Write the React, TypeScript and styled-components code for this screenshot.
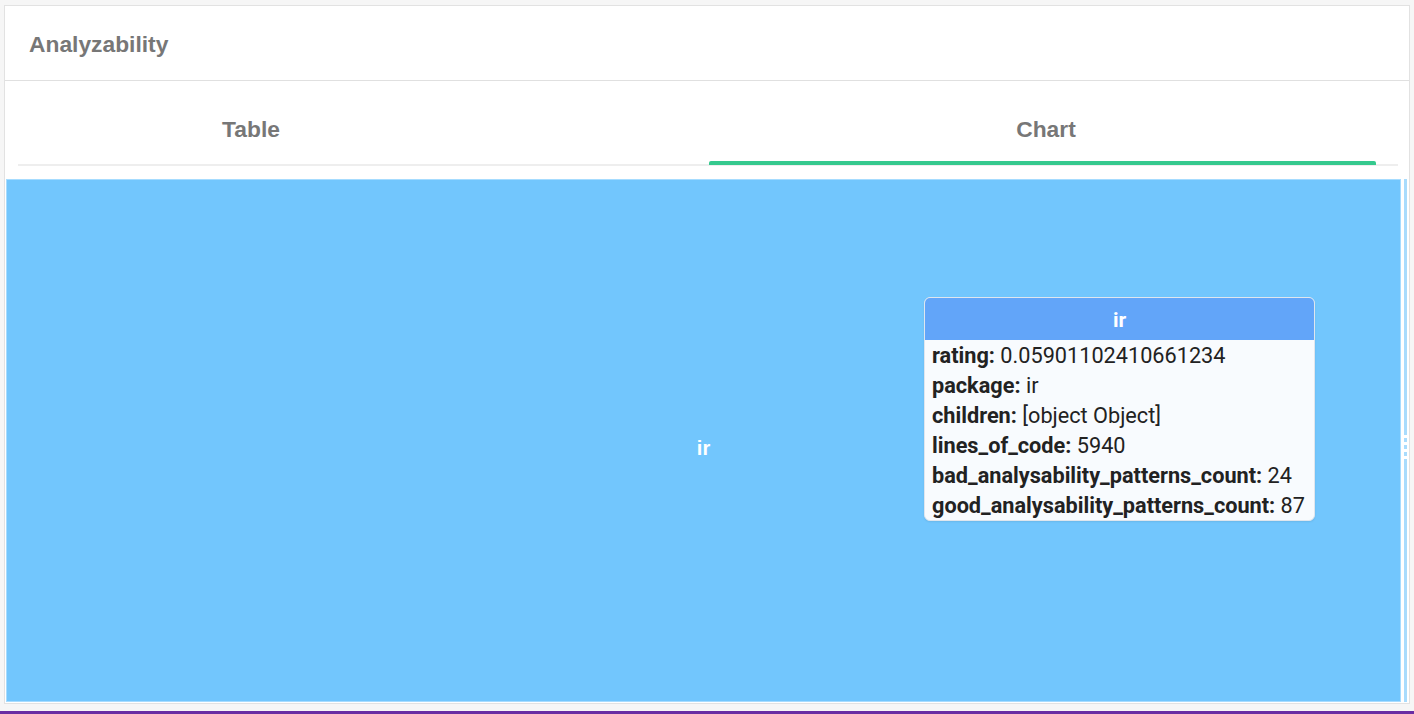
import React from "react";
import styled, { createGlobalStyle } from "styled-components";

const Global = createGlobalStyle`
  html, body { margin: 0; padding: 0; background: #f6f6f6; }
  body { font-family: "Liberation Sans", Arial, sans-serif; overflow: hidden; }
  #root { height: 714px; display: flex; flex-direction: column; }
`;

const Card = styled.section`
  margin: 5px 4px 0 4px;
  width: 1406px;
  height: 699px;
  box-sizing: border-box;
  border: 1px solid #e2e2e2;
  background: #fff;
  display: flex;
  flex-direction: column;
`;

const Header = styled.header`
  height: 75px;
  box-sizing: border-box;
  border-bottom: 1px solid #e0e0e0;
  display: flex;
  align-items: center;
  padding: 2px 0 0 24px;
  font-size: 22.8px;
  font-weight: 700;
  color: #777;
`;

const TabRow = styled.nav`
  position: relative;
  margin: 0 11px 0 13px;
  height: 85px;
  display: flex;
  align-items: stretch;
  border-bottom: 2px solid #eeeeee;
  box-sizing: border-box;
`;

const Tab = styled.div<{ $w: number; $ml?: number }>`
  position: relative;
  flex: 0 0 ${(p) => p.$w}px;
  margin-left: ${(p) => p.$ml ?? 0}px;
  display: flex;
  align-items: center;
  justify-content: center;
  padding-top: 14px;
  box-sizing: border-box;
  font-size: 22.8px;
  font-weight: 700;
  color: #777;
`;

const Indicator = styled.span`
  position: absolute;
  left: 0;
  bottom: -1px;
  width: 667px;
  height: 4px;
  border-radius: 2px 2px 0 0;
  background: #35c98e;
`;

const ChartWrap = styled.div`
  margin: 13px 2px 0 1px;
  height: 523px;
  display: flex;
  gap: 3px;
`;

const Plot = styled.div`
  position: relative;
  flex: 1;
`;

const Scroll = styled.div`
  flex: 0 0 3px;
  background: #a9dcfd;
  position: relative;
`;

const Grip = styled.div`
  position: absolute;
  left: 0;
  top: 252px;
  width: 3px;
  height: 32px;
  background: repeating-linear-gradient(
    to bottom,
    #a9dcfd 0 4px,
    #ffffff 4px 7px
  );
`;

const Tooltip = styled.div`
  position: absolute;
  left: 918px;
  top: 118px;
  width: 391px;
  box-sizing: border-box;
  border: 1px solid #dfe6ee;
  border-radius: 6px;
  overflow: hidden;
  background: #f8fbfe;
  font-family: Roboto, "Liberation Sans", sans-serif;
  box-shadow: 0 1px 2px rgba(0, 0, 0, 0.08);
`;

const TipHead = styled.div`
  height: 42px;
  background: #62a5f9;
  color: #fff;
  font-weight: 700;
  font-size: 21px;
  display: flex;
  align-items: center;
  justify-content: center;
  padding-top: 2px;
  box-sizing: border-box;
`;

const TipRow = styled.div`
  height: 30px;
  line-height: 32px;
  padding-left: 7px;
  font-size: 21.7px;
  color: #222;
  white-space: nowrap;
  b { font-weight: 700; }
`;

const Bottom = styled.div`
  margin-top: auto;
  height: 3px;
  background: #6a2da3;
`;

const rows: [string, string][] = [
  ["rating", "0.05901102410661234"],
  ["package", "ir"],
  ["children", "[object Object]"],
  ["lines_of_code", "5940"],
  ["bad_analysability_patterns_count", "24"],
  ["good_analysability_patterns_count", "87"],
];

export default function App() {
  return (
    <>
      <Global />
      <Card>
        <Header>Analyzability</Header>
        <TabRow>
          <Tab $w={466}>Table</Tab>
          <Tab $w={674} $ml={225}>
            Chart
            <Indicator />
          </Tab>
        </TabRow>
        <ChartWrap>
          <Plot>
            <svg width="1395" height="523" style={{ display: "block" }}>
              <rect x="0.5" y="0.5" width="1394" height="522" fill="#72c6fd" stroke="#a6dcff" />
              <text
                x="697.5"
                y="276"
                textAnchor="middle"
                fill="#fff"
                fontSize="20"
                fontWeight="700"
                fontFamily="'Liberation Sans', Arial, sans-serif"
              >
                ir
              </text>
            </svg>
            <Tooltip>
              <TipHead>ir</TipHead>
              {rows.map(([k, v]) => (
                <TipRow key={k}>
                  <b>{k}:</b> {v}
                </TipRow>
              ))}
            </Tooltip>
          </Plot>
          <Scroll>
            <Grip />
          </Scroll>
        </ChartWrap>
      </Card>
      <Bottom />
    </>
  );
}
